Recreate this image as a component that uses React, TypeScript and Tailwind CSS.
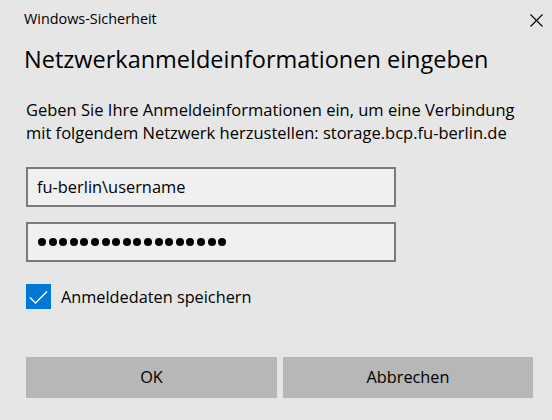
const DOTS = Array.from({ length: 18 }, (_, i) => i);

function CloseIcon() {
  return (
    <svg width="13" height="13" viewBox="0 0 13 13" fill="none" stroke="#000" strokeWidth="1.1">
      <path d="M0.5 0.5 L12.5 12.5 M12.5 0.5 L0.5 12.5" />
    </svg>
  );
}

function Field({ children }: { children: React.ReactNode }) {
  return (
    <div className="flex h-[40px] w-[370px] items-center border-2 border-[#7a7a7a] bg-[#f0f0f0] pl-[9px]">
      {children}
    </div>
  );
}

export default function App() {
  return (
    <div className="flex h-[420px] w-[552px] flex-col bg-[#e6e6e6] font-['Open_Sans',sans-serif] text-black">
      <div className="flex items-start justify-between pl-[24px] pr-[9px] pt-[9px]">
        <span className="text-[14.4px] leading-[20px]">Windows-Sicherheit</span>
        <span className="mt-[5px]">
          <CloseIcon />
        </span>
      </div>

      <h1 className="pl-[24px] pt-[14px] text-[23.5px] leading-[32px]">
        Netzwerkanmeldeinformationen eingeben
      </h1>

      <p className="pl-[26px] pt-[23px] text-[16.5px] leading-[23px]">
        Geben Sie Ihre Anmeldeinformationen ein, um eine Verbindung
        <br />
        mit folgendem Netzwerk herzustellen: storage.bcp.fu-berlin.de
      </p>

      <div className="flex flex-col gap-[15px] pl-[26px] pt-[23px]">
        <Field>
          <span className="text-[16.4px]">fu-berlin\username</span>
        </Field>
        <Field>
          <div className="flex gap-[2.6px] pl-[1px]">
            {DOTS.map((i) => (
              <span key={i} className="h-[8px] w-[8px] rounded-full bg-black" />
            ))}
          </div>
        </Field>
      </div>

      <label className="flex items-center gap-[10px] pl-[26px] pt-[22px]">
        <span className="flex h-[25px] w-[25px] items-center justify-center bg-[#0078d7]">
          <svg width="19" height="14" viewBox="0 0 19 14" fill="none" stroke="#fff" strokeWidth="1.4">
            <path d="M1 7.5 L6.5 13 L18 1.5" />
          </svg>
        </span>
        <span className="text-[16.3px] leading-[22px]">Anmeldedaten speichern</span>
      </label>

      <div className="flex gap-[6px] pl-[26px] pt-[48px]">
        <button className="flex h-[41px] w-[251px] items-center justify-center bg-[#b7b7b7] text-[16.3px]">
          OK
        </button>
        <button className="flex h-[41px] w-[250px] items-center justify-center bg-[#b7b7b7] text-[16.3px]">
          Abbrechen
        </button>
      </div>
    </div>
  );
}
